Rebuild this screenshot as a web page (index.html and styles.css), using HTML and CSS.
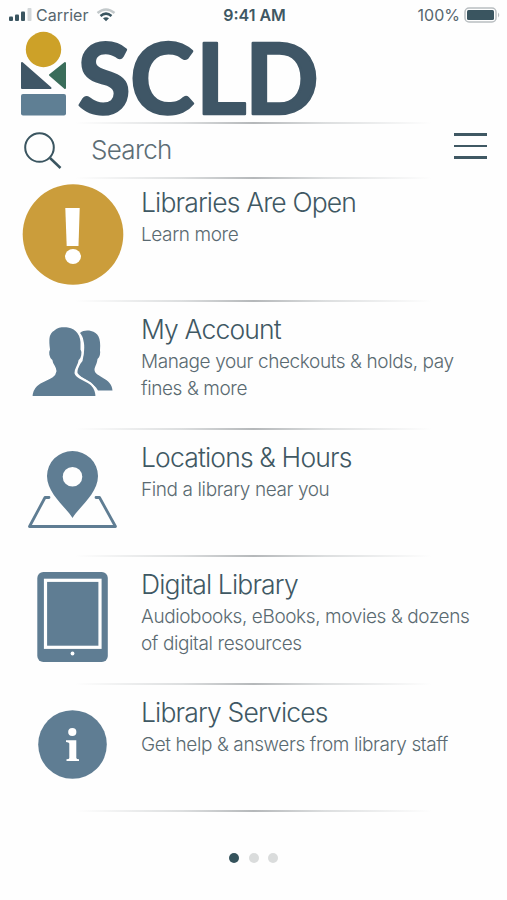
FILE: index.html
```html
<!DOCTYPE html>
<html lang="en">
<head>
    <meta charset="UTF-8">
    <meta name="viewport" content="width=device-width, initial-scale=1.0">
    <title>SCLD</title>
    <link rel="stylesheet" href="styles.css">
</head>
<body>
    <div class="status-bar">
        <div class="carrier">
            <svg width="24" height="14" viewBox="0 0 24 14">
                <rect x="1" y="8.5" width="4" height="4.5" rx="1"/>
                <rect x="7" y="6.5" width="4" height="6.5" rx="1"/>
                <rect x="13" y="3.5" width="4" height="9.5" rx="1"/>
                <rect class="faded" x="19.5" y="0" width="4" height="13" rx="1"/>
            </svg>
            <span>Carrier</span>
            <svg class="wifi" width="20" height="14" viewBox="0 0 20 14">
                <path class="faded-line" d="M1.5 5 Q10 -2 18.500 5"/>
                <path class="arc" d="M4.500 8 Q10 3.300 15.500 8"/>
                <path d="M7 10.300 Q10 8 13 10.300 L10 13.300Z"/>
            </svg>
        </div>
        <div class="time">9:41 AM</div>
        <div class="battery">
            <span>100%</span>
            <svg width="37" height="16" viewBox="0 0 37 16">
                <rect class="battery-case" x="1" y="1" width="31" height="14" rx="4"/>
                <rect x="3" y="3" width="27" height="10" rx="1.500"/>
                <path class="battery-cap" d="M34 5.500 Q36.500 8 34 10.500Z"/>
            </svg>
        </div>
    </div>

    <header class="brand">
        <svg width="300" height="88" viewBox="20 30 300 88">
            <circle cx="43.500" cy="49.500" r="17.700" fill="#cda128"/>
            <path d="M22 63 L50.500 88 H22Z" fill="#3f5666" stroke="#3f5666" stroke-width="2" stroke-linejoin="round"/>
            <path d="M65 63 V88 L50 75Z" fill="#3a6d5a" stroke="#3a6d5a" stroke-width="2" stroke-linejoin="round"/>
            <rect x="21" y="94" width="45" height="21.500" rx="2" fill="#5f7f94"/>
            <text class="logo-text" x="77.500 130 196 245" y="114">SCLD</text>
        </svg>
    </header>

    <div class="divider"></div>
    <div class="search-bar">
        <svg class="search-icon" width="40" height="40" viewBox="0 0 40 40">
            <circle cx="15.500" cy="15.500" r="14.300"/>
            <path class="handle" d="M26 26 L36.500 36"/>
        </svg>
        <span class="search-text">Search</span>
        <div class="menu-icon"><i></i><i></i><i></i></div>
    </div>

    <div class="divider"></div>
    <div class="item first">
        <div class="icon">
            <svg width="102" height="102" viewBox="0 0 102 102">
                <circle cx="51" cy="50.500" r="50.300" fill="#cb9d3b"/>
                <path d="M43.300 24 H57.700 L56.500 62 H44.700Z" fill="#fff"/>
                <ellipse cx="51" cy="72.500" rx="8" ry="7.500" fill="#fff"/>
            </svg>
        </div>
        <div class="text">
            <h2>Libraries Are Open</h2>
            <p>Learn more</p>
        </div>
    </div>

    <div class="divider"></div>
    <div class="item">
        <div class="icon">
            <svg class="blue" width="102" height="100" viewBox="22 310 102 100">
                <path d="M80 333 C83 330.500 87 330 91 331 C98 332.500 101 338 100 350 C100.500 353 100 357 97.500 359 C97 364 94.500 367 94.500 370 C95 377 112 378 112.500 390.500 H98 C94 382 80 378 77.500 373 C77 369 80 364 82.500 361 C84 354 85 346 83.500 341 C83 337 81.500 335 80 333Z"/>
                <path class="person" d="M64.500 326 C74 326.500 80.500 332 81.500 342 L81.500 349.500 C83.500 352 82 359 79.500 360.500 C79 366 75 368.500 75.500 373 C77 381 96 378 96.500 397 H31.500 C32 378 54 382 55.500 371 C55.500 367 52 365 51.500 360.500 C48 358 47.500 352 49 349.500 C48 342 47 333 54 329.500 C57 327 61 326 64.500 326Z"/>
            </svg>
        </div>
        <div class="text">
            <h2>My Account</h2>
            <p>Manage your checkouts &amp; holds, pay fines &amp; more</p>
        </div>
    </div>

    <div class="divider"></div>
    <div class="item">
        <div class="icon">
            <svg class="blue" width="102" height="100" viewBox="22 438 102 100">
                <path fill-rule="evenodd" d="M72.500 518 C67 508 47 494 47 476 A25.500 25 0 0 1 98 476 C98 494 78 508 72.500 518Z M72.500 467 A9.800 9.800 0 1 0 72.500 486.600 A9.800 9.800 0 1 0 72.500 467Z"/>
                <path class="map-line" d="M49 497.500 H45 L29.500 526.500 H115.500 L99.500 497.500 H96"/>
            </svg>
        </div>
        <div class="text">
            <h2>Locations &amp; Hours</h2>
            <p>Find a library near you</p>
        </div>
    </div>

    <div class="divider"></div>
    <div class="item">
        <div class="icon">
            <svg class="blue" width="102" height="100" viewBox="22 565 102 100">
                <rect x="37.300" y="572" width="70.500" height="90" rx="6"/>
                <rect x="45.500" y="580.300" width="54.500" height="67" fill="none" stroke="#fff" stroke-width="3.200"/>
                <circle cx="72.500" cy="653.500" r="1.900" fill="#fff"/>
            </svg>
        </div>
        <div class="text">
            <h2>Digital Library</h2>
            <p>Audiobooks, eBooks, movies &amp; dozens of digital resources</p>
        </div>
    </div>

    <div class="divider"></div>
    <div class="item">
        <div class="icon">
            <svg class="blue" width="102" height="100" viewBox="22 693 102 100">
                <circle cx="72.500" cy="744.500" r="34.300"/>
                <circle cx="72.300" cy="732" r="4.100" fill="#fff"/>
                <path d="M66 740.300 H76.300 V758 Q76.500 759.300 79 759.300 V761 H66.500 V759.300 Q69.300 759.300 69.300 758 V743.500 Q69 742 66 742Z" fill="#fff"/>
            </svg>
        </div>
        <div class="text">
            <h2>Library Services</h2>
            <p>Get help &amp; answers from library staff</p>
        </div>
    </div>
    <div class="divider"></div>

    <div class="dots"><i class="active"></i><i></i><i></i></div>
</body>
</html>
```
FILE: styles.css
```css
* {
    box-sizing: border-box;
}
body {
    font-family: Inter, "Liberation Sans", sans-serif;
    margin: 0;
    height: 900px;
    overflow: hidden;
    background-color: #fefefe;
    color: #3f5863;
}
svg {
    display: block;
    overflow: visible;
}
.status-bar {
    display: grid;
    grid-template-columns: 1fr auto 1fr;
    align-items: center;
    height: 30px;
    padding: 0 6px 0 8px;
    font-size: 16px;
    fill: #3a5560;
}
.carrier, .battery {
    display: flex;
    align-items: center;
    color: #56666e;
}
.carrier {
    gap: 4px;
}
.battery {
    justify-content: flex-end;
    gap: 4px;
}
.wifi {
    margin-left: 4px;
}
.time {
    font-weight: 600;
}
.faded {
    fill: #d3d7d9;
}
.faded-line {
    fill: none;
    stroke: #c3c9cb;
    stroke-width: 2.5;
}
.arc {
    fill: none;
    stroke: #3a5560;
    stroke-width: 2.5;
}
.battery-case {
    fill: none;
    stroke: #b9bec1;
    stroke-width: 1.5;
}
.battery-cap {
    fill: #b9bec1;
}
.brand {
    height: 92px;
    padding-left: 20px;
}
.logo-text {
    font-family: Lato, sans-serif;
    font-size: 97px;
    font-weight: 700;
    fill: #3f5666;
    stroke: #3f5666;
    stroke-width: 2.5;
    stroke-linejoin: round;
}
.divider {
    height: 2px;
    margin: 0 75px;
    background: linear-gradient(to right, transparent, #dcdedf 30%, #b5b8ba 50%, #dcdedf 70%, transparent);
}
.search-bar {
    display: flex;
    height: 53px;
    padding: 8px 20px 0 24px;
}
.search-icon {
    fill: none;
    stroke: #3a5560;
    stroke-width: 2;
}
.search-icon .handle {
    stroke-width: 2.5;
}
.search-text {
    flex: 1;
    margin-left: 27px;
    font-size: 26px;
    font-weight: 300;
    line-height: 36px;
    letter-spacing: -0.7px;
    color: #5c6d75;
}
.menu-icon {
    display: flex;
    flex-direction: column;
    gap: 9px;
    width: 33px;
    padding-top: 1px;
}
.menu-icon i {
    height: 2.5px;
    background-color: #3f5863;
}
.item {
    display: flex;
    height: 125.6px;
    padding-left: 22px;
}
.item.first {
    height: 121px;
}
.icon {
    width: 119px;
    padding-top: 8px;
}
.first .icon {
    padding-top: 5px;
}
.blue {
    fill: #5f7d93;
}
.person {
    stroke: #fefefe;
    stroke-width: 2;
}
.map-line {
    fill: none;
    stroke: #5f7d93;
    stroke-width: 2.8;
    stroke-linejoin: round;
    stroke-linecap: round;
}
.text {
    width: 345px;
    padding-top: 9px;
}
.first .text {
    padding-top: 5px;
}
h2 {
    margin: 0 0 1px;
    font-size: 26.5px;
    font-weight: 300;
    line-height: 36px;
    letter-spacing: -0.85px;
}
p {
    margin: 0;
    font-size: 19px;
    font-weight: 300;
    line-height: 27px;
    letter-spacing: -0.4px;
    color: #5a6a71;
}
.dots {
    display: flex;
    justify-content: center;
    gap: 9.5px;
    padding-top: 41px;
}
.dots i {
    width: 10px;
    height: 10px;
    border-radius: 50%;
    background-color: #dadcdc;
}
.dots .active {
    background-color: #35535c;
}
```
